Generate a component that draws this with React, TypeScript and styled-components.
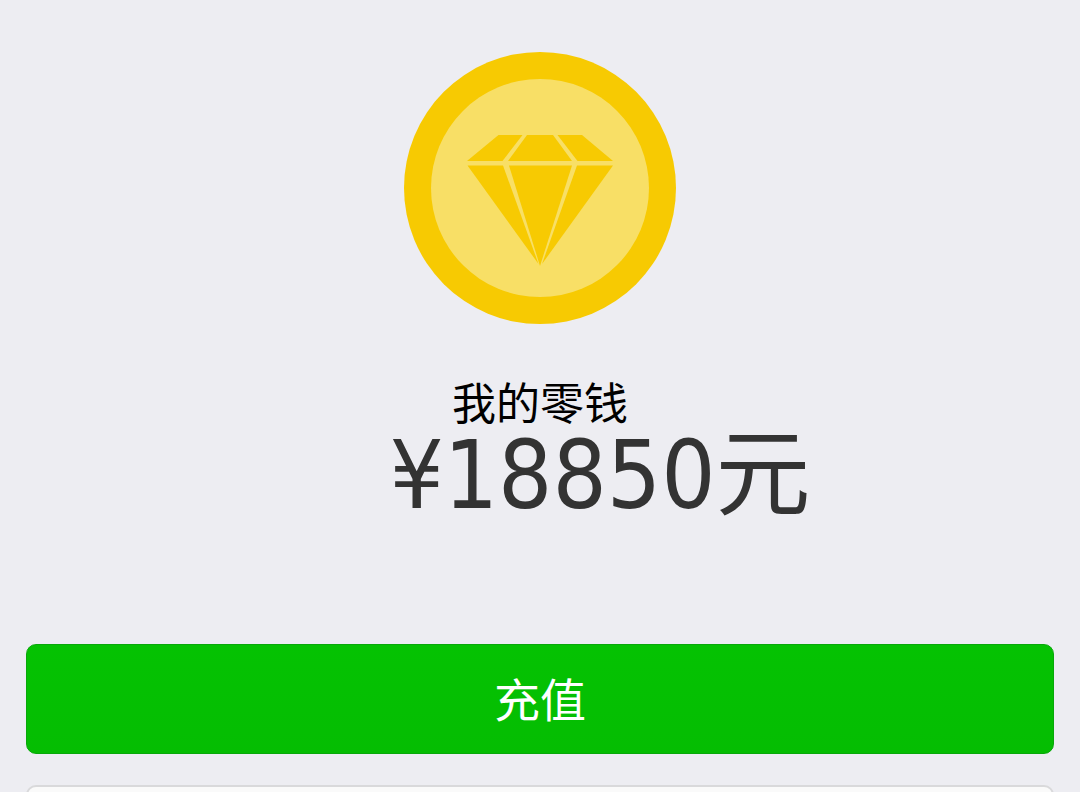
import React from "react";
import styled, { createGlobalStyle } from "styled-components";

const GlobalStyle = createGlobalStyle`
  * { box-sizing: border-box; }
  body {
    margin: 0;
    background: #ededf2;
    font-family: "Noto Sans CJK SC", "Noto Sans", sans-serif;
  }
`;

const Page = styled.main`
  display: flex;
  flex-direction: column;
  height: 100vh;
  overflow: hidden;
  padding: 52px 26px 0;
`;

const Balance = styled.section`
  display: flex;
  flex-direction: column;
  align-items: center;
  flex-shrink: 0;
`;

const Coin = styled.svg`
  display: block;
  width: 272px;
  height: 272px;
`;

const Title = styled.h1`
  margin: 52px 0 0;
  color: #000;
  font-size: 44px;
  font-weight: 400;
  line-height: 50px;
`;

const Amount = styled.p`
  margin: 0;
  padding-left: 120px;
  color: #333;
  font-family: "DejaVu Sans Condensed", "Noto Sans CJK SC", sans-serif;
  font-size: 95px;
  font-weight: 400;
  line-height: 98px;
  white-space: nowrap;
`;

const Actions = styled.div`
  display: flex;
  flex-direction: column;
  flex-shrink: 0;
  gap: 31px;
  margin-top: 120px;
`;

const Button = styled.button<{ $primary?: boolean }>`
  flex-shrink: 0;
  width: 100%;
  height: 110px;
  padding: 0 0 4px;
  border: ${(p) => (p.$primary ? "1px solid #08a80a" : "2px solid #d9d9db")};
  border-radius: 10px;
  background: ${(p) => (p.$primary ? "linear-gradient(#05c202, #05bd02)" : "#fafafa")};
  color: ${(p) => (p.$primary ? "#fff" : "#000")};
  font-family: inherit;
  font-size: 46px;
  font-weight: 400;
  line-height: 64px;
`;

function DiamondCoin() {
  return (
    <Coin viewBox="0 0 272 272" aria-hidden="true">
      <circle cx="136" cy="136" r="136" fill="#f7ca02" />
      <circle cx="136" cy="136" r="109" fill="#f8df66" />
      <g fill="#f7ca02">
        <path d="M94.500 83H118.500L98.500 109H63Z" />
        <path d="M123 83H149L168 109H104Z" />
        <path d="M153.500 83H178L209 109H173.500Z" />
        <path d="M63.500 113.500H99L134.500 212Z" />
        <path d="M105 113.500H168L136 214Z" />
        <path d="M173 113.500H209L138 212Z" />
      </g>
    </Coin>
  );
}

export default function App() {
  return (
    <>
      <GlobalStyle />
      <Page lang="zh-CN">
        <Balance>
          <DiamondCoin />
          <Title>我的零钱</Title>
          <Amount>¥18850元</Amount>
        </Balance>
        <Actions>
          <Button type="button" $primary>充值</Button>
          <Button type="button" aria-label="提现" />
        </Actions>
      </Page>
    </>
  );
}
